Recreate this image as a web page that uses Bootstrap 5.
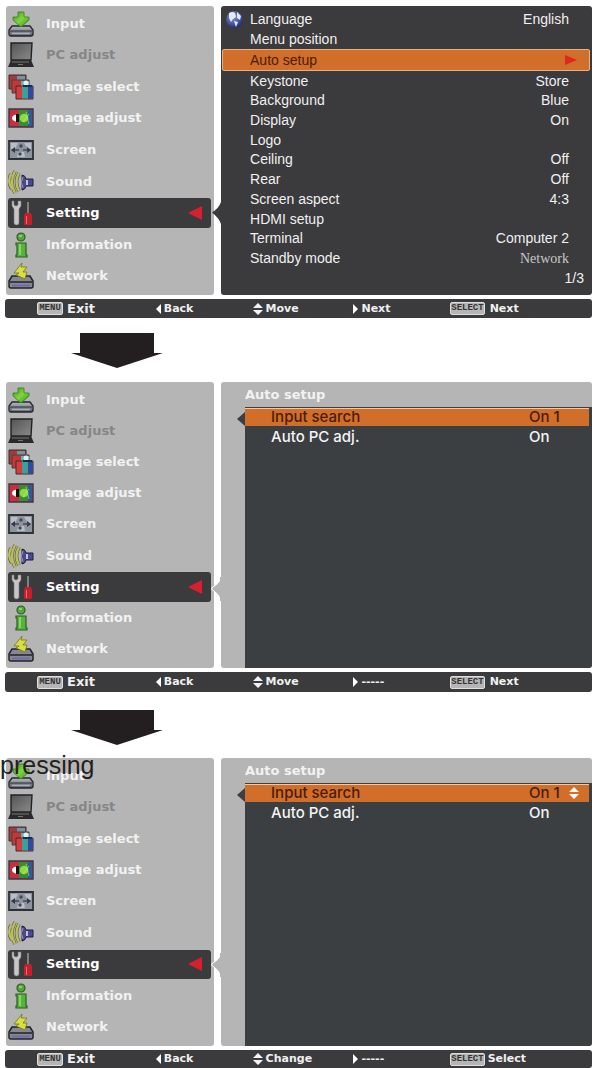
<!DOCTYPE html>
<html lang="en">
<head>
<meta charset="utf-8">
<meta name="viewport" content="width=device-width, initial-scale=1">
<title>Projector menu: Auto setup</title>
<link href="https://cdn.jsdelivr.net/npm/bootstrap@5.3.0/dist/css/bootstrap.min.css" rel="stylesheet">
<style>
  :root { --panel: #b5b5b5; --ink: #3b3a3d; --slate: #3b3f41; --hot: #d16e2a; }
  body { background: #fff; font-family: "DejaVu Sans", sans-serif; font-size: 13px; line-height: 16px; }
  main { padding: 6px 3px 0 6px; }
  button { font: inherit; color: inherit; background: none; border: 0; padding: 0; text-align: left; }
  .osd-body { gap: 7px; min-height: 289px; }
  .osd-two .osd-body { min-height: 286px; }
  .osd-three .osd-body { min-height: 288px; }
  .side { flex: 0 0 35.5%; background: var(--panel); border-radius: 3px; padding: 2px 3px 3px 2px; display: grid; grid-template-rows: repeat(9, 1fr); }
  .side button { gap: 12px; color: #f2f2f2; font-weight: 700; border-radius: 3px; }
  .side button:disabled { color: #868686; }
  .side svg.ico { width: 26px; height: 26px; flex: none; }
  .side .chosen { background: var(--ink); margin: 1px 0; color: #fff; }
  .chosen .pointer { width: 14px; height: 14px; margin-left: auto; margin-right: 9px; }
  .pane { flex: 1 1 0; border-radius: 3px; }
  .notch { position: absolute; left: -11px; top: 194px; width: 14px; height: 26px; }
  .pane-list { background: var(--ink); color: #f0f0f0; padding: 4px 2px 7px 1px; font-family: "Liberation Sans", sans-serif; font-size: 14px; line-height: 17px; }
  .pane-list button, .pane-list .page { flex: 1 1 0; padding: 0 21px 0 28px; }
  .pane-list .page { padding-right: 6px; }
  .pane-list .hot { background: var(--hot); border: 1px solid #e6b189; border-radius: 2px; color: #4b1c0b; padding: 0 12px 0 27px; }
  .globe { position: absolute; left: 4px; top: 4px; width: 19px; height: 19px; }
  .serif { font-family: "Liberation Serif", serif; color: #c8c8c8; }
  .pane-sub { background: var(--panel); color: #f4f4f4; }
  .pane-sub h2 { font-size: 13px; line-height: 16px; font-weight: 700; margin: 0; padding: 5px 0 4px 24px; color: #f2f2f2; }
  .inner { background: var(--slate); margin-left: 24px; padding: 1px 3px 0 0; border-radius: 0 0 3px 0; font-family: Inter, sans-serif; font-size: 15px; line-height: 16px; font-weight: 500; }
  .inner button { display: grid; grid-template-columns: 73fr 17fr; width: 100%; padding: 1px 0 1px 26px; }
  .inner .hot { background: var(--hot); color: #4b1c0b; border-top: 1px solid #f3c9a0; padding-top: 0; margin-bottom: 2px; }
  .tab { position: absolute; left: -8px; top: 5px; width: 8px; height: 14px; }
  .hints { background: var(--ink); color: #f0f0f0; border-radius: 3px; margin: 4px 0 0 -1px; padding-left: 32px; display: grid; grid-template-columns: 118fr 97fr 101fr 98fr 142fr; font-size: 11px; line-height: 19px; font-weight: 700; }
  .osd-two .hints { line-height: 20px; }
  .osd-three .hints { line-height: 18px; }
  .hints > button { gap: 2px; white-space: nowrap; }
  .hints .exit { font-size: 13px; gap: 4px; }
  .hints .wide { gap: 5px; }
  .osd-three .hints .wide { gap: 3px; }
  .key { font: 700 9px/11px "Liberation Mono", monospace; color: #333; background: #b5b5b5; border: 1px solid #ddd; border-radius: 2px; min-width: 26px; text-align: center; }
  .down { display: block; width: 92px; height: 35px; margin: 15px 0 14px 65px; }
  .osd-two + .down { margin: 18px 0 13px 65px; }
  .caption { position: absolute; left: -6px; top: -8px; margin: 0; font-family: "Liberation Sans", sans-serif; font-size: 25px; line-height: 30px; color: #231f20; z-index: 2; }
</style>
</head>
<body>
<svg width="0" height="0" class="position-absolute" aria-hidden="true">
  <defs>
    <linearGradient id="steel" x1="0" y1="0" x2="0" y2="1"><stop offset="0" stop-color="#b8bcc2"/><stop offset="1" stop-color="#555a62"/></linearGradient>
    <linearGradient id="leaf" x1="0" y1="0" x2="1" y2="1"><stop offset="0" stop-color="#3f8f22"/><stop offset=".5" stop-color="#7ed83a"/><stop offset="1" stop-color="#3c8a20"/></linearGradient>
    <linearGradient id="lid" x1="0" y1="0" x2="1" y2="1"><stop offset="0" stop-color="#555"/><stop offset="1" stop-color="#8a8a8a"/></linearGradient>
    <radialGradient id="ball" cx=".4" cy=".35" r=".7"><stop offset="0" stop-color="#7f9bdc"/><stop offset="1" stop-color="#20266e"/></radialGradient>
  </defs>
  <symbol id="i-input" viewBox="0 0 26 26"><path d="M4 15h18l3 4v4q0 2-2 2H3q-2 0-2-2v-4z" fill="url(#steel)" stroke="#23262c" stroke-width="1.3"/><path d="M2 20h22" stroke="#2b2e34"/><path d="M4 22.5h18" stroke="#a9adb5" stroke-width="1.5"/><path d="M10 1h6v5h5v3l-8 7-8-7V6h5z" fill="url(#leaf)" stroke="#3b7b25" stroke-width=".8"/></symbol>
  <symbol id="i-pc" viewBox="0 0 26 26"><path d="M3 1h21l-1 17H3z" fill="url(#lid)" stroke="#222" stroke-width="1.4"/><path d="M3 18h20l3 7H0z" fill="#2a2a2c"/><path d="M4 20h17M10 22.5h5" stroke="#777"/></symbol>
  <symbol id="i-select" viewBox="0 0 26 26"><path d="M1 1h17v14H1z" fill="#a43a3a" stroke="#333"/><path d="M9 2h8v5H9z" fill="#6d98a0"/><path d="M4 6h17v13H4z" fill="#c93434" stroke="#444"/><path d="M13 7h8v8h-8z" fill="#5ab5b4"/><circle cx="18" cy="9" r="2.5" fill="#d8f4f4"/><path d="M8 12h17v13H8z" fill="#d83a3d" stroke="#333"/><path d="M14 12.5h6v12h-6z" fill="#3ba09a"/><path d="M20 12.5h5v12h-5z" fill="#34499a"/><path d="M15 12h9" stroke="#152f48" stroke-width="2"/></symbol>
  <symbol id="i-adjust" viewBox="0 0 26 26"><path d="M1 4h24v18H1z" fill="#c62f3b" stroke="#38384a" stroke-width="1.4"/><path d="M11 5h9v16h-9z" fill="#3b8a36"/><path d="M20 5h4v16h-4z" fill="#34569b"/><path d="M10 9q-6 1-6 4t6 4z" fill="#fff"/><path d="M8 9h3v8H8z" fill="#111"/><circle cx="16" cy="13" r="4.3" fill="#8edb39"/><path d="M18 7l3 12M21 9l-6 8" stroke="#b5ec77" stroke-width=".6"/></symbol>
  <symbol id="i-screen" viewBox="0 0 26 26"><path d="M1 4h24v18H1z" fill="#8e949c" stroke="#2e3038" stroke-width="1.8"/><path d="M3 6h7l-3 6H3zM16 6h7v6h-3zM10 15h6l1 5H9z" fill="#b9bec6"/><path d="M3 13l4-3v6zM23 13l-4-3v6z" fill="#34364a"/><circle cx="13" cy="9" r="1.700" fill="#44475a"/><circle cx="12" cy="17" r="1.700" fill="#44475a"/><path d="M7 13h4M15 13h5" stroke="#45485a" stroke-width="1.5"/></symbol>
  <symbol id="i-sound" viewBox="0 0 26 26"><path d="M3 5q-4 8 1 15M7 2q-6 11 0 22M11 4q-5 9 0 18" fill="none" stroke="#5c6030" stroke-width="3.600"/><path d="M3 5q-4 8 1 15M7 2q-6 11 0 22M11 4q-5 9 0 18" fill="none" stroke="#b9bd66" stroke-width="2.400"/><path d="M14 6q3 0 4 4h7v7h-7q-1 4-4 4z" fill="#4b4a91" stroke="#1d1c45"/><path d="M19 11v5" stroke="#c1c0e4" stroke-width="2"/><path d="M15 8q-3 5 0 11" stroke="#9998c5" fill="none"/></symbol>
  <symbol id="i-setting" viewBox="0 0 26 26"><path d="M4 1v5l2 3v14q0 2 2.500 2T11 23V9l2-3V1l-3 0v4l-2 1-2-1V1z" fill="#c6c6c6" stroke="#777" stroke-width=".6"/><path d="M20 2v12" stroke="#999" stroke-width="1.5"/><path d="M17 13h6l1 3v8q0 1-1 1h-6q-1 0-1-1v-8z" fill="#c4202c"/><path d="M18.500 16v8" stroke="#f06a70"/></symbol>
  <symbol id="i-info" viewBox="0 0 26 26"><circle cx="13" cy="5" r="4" fill="#55a53c" stroke="#2b5f20" stroke-width="1.200"/><path d="M8 11h10v12h1v2H8v-2h1v-10H8z" fill="#58b23e" stroke="#2b5f20" stroke-width="1.200"/><path d="M12 12v11M11 4h3" stroke="#97df75" stroke-width="1.500"/></symbol>
  <symbol id="i-network" viewBox="0 0 26 26"><path d="M4 13h18l3 5v5q0 2-2 2H3q-2 0-2-2v-5z" fill="#858890" stroke="#23232a" stroke-width="1.500"/><path d="M2 19h22" stroke="#23232a" stroke-width="1.500"/><path d="M4 22.500h18" stroke="#6f6daa" stroke-width="2"/><path d="M14 0L6 10h5L8 12l9 4 2-7h-4l4-5h-6z" fill="#d9df3c" stroke="#6f7420" stroke-width=".8"/></symbol>
  <symbol id="g-left" viewBox="0 0 7 12"><path d="M6 1v10L1 6z" fill="#fff"/></symbol>
  <symbol id="g-right" viewBox="0 0 7 12"><path d="M1 1v10l5-5z" fill="#fff"/></symbol>
  <symbol id="g-updown" viewBox="0 0 12 12"><path d="M1 5l5-5 5 5zM1 7h10l-5 5z" fill="#f4f4f4"/></symbol>
  <symbol id="g-down" viewBox="0 0 92 35"><path d="M9 0h74v20h9L46 35 0 20h9z" fill="#231f20"/></symbol>
</svg>

<main>
  <section class="osd-one">
    <div class="osd-body d-flex">
      <nav class="side" aria-label="Menu"></nav>
      <div class="pane pane-list position-relative d-flex flex-column">
        <svg class="notch" viewBox="0 0 14 26" aria-hidden="true"><path d="M14 0L11 2Q9 8 2 12.500 9 18 11 24l3 2z" fill="#3b3a3d"/></svg>
        <svg class="globe" viewBox="0 0 19 19" aria-hidden="true"><circle cx="9.500" cy="9.500" r="8.500" fill="url(#ball)"/><path d="M4 3q4-2 6 0l1 4-3 2-2 3-2-4zM12 2l4 4-1 4-3-2zM9 11l4 1-2 5z" fill="#e4ebff"/></svg>
        <button class="d-flex justify-content-between align-items-center"><span>Language</span><span>English</span></button>
        <button class="d-flex justify-content-between align-items-center"><span>Menu position</span></button>
        <button class="hot d-flex justify-content-between align-items-center"><span>Auto setup</span><svg width="12" height="12" viewBox="0 0 12 12" aria-hidden="true"><path d="M0 1v10l12-5z" fill="#e0281c"/></svg></button>
        <button class="d-flex justify-content-between align-items-center"><span>Keystone</span><span>Store</span></button>
        <button class="d-flex justify-content-between align-items-center"><span>Background</span><span>Blue</span></button>
        <button class="d-flex justify-content-between align-items-center"><span>Display</span><span>On</span></button>
        <button class="d-flex justify-content-between align-items-center"><span>Logo</span></button>
        <button class="d-flex justify-content-between align-items-center"><span>Ceiling</span><span>Off</span></button>
        <button class="d-flex justify-content-between align-items-center"><span>Rear</span><span>Off</span></button>
        <button class="d-flex justify-content-between align-items-center"><span>Screen aspect</span><span>4:3</span></button>
        <button class="d-flex justify-content-between align-items-center"><span>HDMI setup</span></button>
        <button class="d-flex justify-content-between align-items-center"><span>Terminal</span><span>Computer 2</span></button>
        <button class="d-flex justify-content-between align-items-center"><span>Standby mode</span><span class="serif">Network</span></button>
        <div class="page d-flex justify-content-end align-items-center">1/3</div>
      </div>
    </div>
    <footer class="hints">
      <button class="exit d-flex align-items-center"><span class="key">MENU</span>Exit</button>
      <button class="d-flex align-items-center"><svg width="7" height="12"><use href="#g-left"/></svg>Back</button>
      <button class="d-flex align-items-center"><svg width="12" height="12"><use href="#g-updown"/></svg>Move</button>
      <button class="d-flex align-items-center"><svg width="7" height="12"><use href="#g-right"/></svg>Next</button>
      <button class="wide d-flex align-items-center"><span class="key">SELECT</span>Next</button>
    </footer>
  </section>

  <svg class="down" aria-hidden="true"><use href="#g-down"/></svg>

  <section class="osd-two">
    <div class="osd-body d-flex">
      <nav class="side" aria-label="Menu"></nav>
      <div class="pane pane-sub position-relative d-flex flex-column">
        <svg class="notch" viewBox="0 0 14 26" aria-hidden="true"><path d="M11 2Q9 8 1 12.500 9 18 11 24z" fill="#b5b5b5" stroke="#fff"/><path d="M10 1h4v24h-4z" fill="#b5b5b5"/></svg>
        <h2>Auto setup</h2>
        <div class="inner position-relative flex-fill">
          <svg class="tab" viewBox="0 0 8 14" aria-hidden="true"><path d="M8 0v14L0 7z" fill="#3b3f41"/></svg>
          <button class="hot"><span>Input search</span><span>On 1</span></button>
          <button><span>Auto PC adj.</span><span>On</span></button>
        </div>
      </div>
    </div>
    <footer class="hints">
      <button class="exit d-flex align-items-center"><span class="key">MENU</span>Exit</button>
      <button class="d-flex align-items-center"><svg width="7" height="12"><use href="#g-left"/></svg>Back</button>
      <button class="d-flex align-items-center"><svg width="12" height="12"><use href="#g-updown"/></svg>Move</button>
      <button class="d-flex align-items-center"><svg width="7" height="12"><use href="#g-right"/></svg>-----</button>
      <button class="wide d-flex align-items-center"><span class="key">SELECT</span>Next</button>
    </footer>
  </section>

  <svg class="down" aria-hidden="true"><use href="#g-down"/></svg>

  <section class="osd-three position-relative">
    <p class="caption">pressing</p>
    <div class="osd-body d-flex">
      <nav class="side" aria-label="Menu"></nav>
      <div class="pane pane-sub position-relative d-flex flex-column">
        <svg class="notch" viewBox="0 0 14 26" aria-hidden="true"><path d="M11 2Q9 8 1 12.500 9 18 11 24z" fill="#b5b5b5" stroke="#fff"/><path d="M10 1h4v24h-4z" fill="#b5b5b5"/></svg>
        <h2>Auto setup</h2>
        <div class="inner position-relative flex-fill">
          <svg class="tab" viewBox="0 0 8 14" aria-hidden="true"><path d="M8 0v14L0 7z" fill="#3b3f41"/></svg>
          <button class="hot"><span>Input search</span><span class="d-flex align-items-center gap-2">On 1 <svg width="12" height="12"><use href="#g-updown"/></svg></span></button>
          <button><span>Auto PC adj.</span><span>On</span></button>
        </div>
      </div>
    </div>
    <footer class="hints">
      <button class="exit d-flex align-items-center"><span class="key">MENU</span>Exit</button>
      <button class="d-flex align-items-center"><svg width="7" height="12"><use href="#g-left"/></svg>Back</button>
      <button class="d-flex align-items-center"><svg width="12" height="12"><use href="#g-updown"/></svg>Change</button>
      <button class="d-flex align-items-center"><svg width="7" height="12"><use href="#g-right"/></svg>-----</button>
      <button class="wide d-flex align-items-center"><span class="key">SELECT</span>Select</button>
    </footer>
  </section>
</main>

<script src="https://cdn.jsdelivr.net/npm/bootstrap@5.3.0/dist/js/bootstrap.bundle.min.js"></script>
<script>
  // The side menu is the same on every screen.
  const items = [
    ["input", "Input"], ["pc", "PC adjust"], ["select", "Image select"],
    ["adjust", "Image adjust"], ["screen", "Screen"], ["sound", "Sound"],
    ["setting", "Setting"], ["info", "Information"], ["network", "Network"]
  ];
  const menu = items.map(([icon, label]) => {
    const chosen = icon === "setting";
    return `<button class="d-flex align-items-center${chosen ? " chosen" : ""}"${icon === "pc" ? " disabled" : ""}>
      <svg class="ico" aria-hidden="true"><use href="#i-${icon}"/></svg><span>${label}</span>${chosen
        ? '<svg class="pointer" viewBox="0 0 14 14" aria-hidden="true"><path d="M14 0v14L0 7z" fill="#d8202c"/></svg>' : ""}</button>`;
  }).join("");
  document.querySelectorAll(".side").forEach(nav => { nav.innerHTML = menu; });
</script>
</body>
</html>
